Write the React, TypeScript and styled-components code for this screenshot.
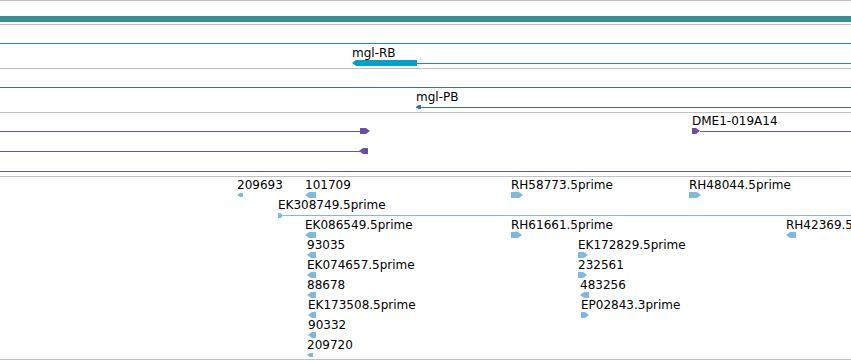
import React from 'react'
import styled, { createGlobalStyle } from 'styled-components'

const GlobalStyle = createGlobalStyle`
  html, body {
    margin: 0;
    padding: 0;
    background: #ffffff;
  }
`

const VIEW_WIDTH = 851
const LANE = 20

const Page = styled.div`
  width: ${VIEW_WIDTH}px;
  height: 360px;
  overflow: hidden;
  background: #ffffff;
  display: flex;
  flex-direction: column;
  font-family: 'DejaVu Sans', 'Liberation Sans', sans-serif;
  font-size: 12px;
  color: #000;
`

const Ruler = styled.div`
  box-sizing: border-box;
  height: 25px;
  padding-top: 15px;
  border-top: 1px solid #c0c0c0;
  border-bottom: 1px solid #c0c0c0;
`

const RulerBar = styled.div`
  height: 6px;
  background: #3e8d8e;
`

const Track = styled.section<{ $lanes: number }>`
  box-sizing: border-box;
  height: ${(p) => p.$lanes * LANE + 4}px;
  border-bottom: 1px solid #c0c0c0;
  display: flex;
  flex-direction: column;
`

const TallTrack = styled(Track)`
  height: ${(p) => p.$lanes * LANE + 3}px;
  flex: none;
`

/* one row of features; x positions along the row are genome coordinates */
const Lane = styled.div`
  position: relative;
  height: ${LANE}px;
  flex: none;
`

const Line = styled.div<{ $color: string }>`
  position: absolute;
  top: 18px;
  height: 1px;
  background: ${(p) => p.$color};
`

const Label = styled.span`
  position: absolute;
  top: 1px;
  line-height: 14px;
  white-space: nowrap;
`

const GlyphSvg = styled.svg`
  position: absolute;
  display: block;
  overflow: visible;
`

type Dir = 'l' | 'r'

type Feat = {
  x: number
  w: number
  dir: Dir
  label?: string
  h?: number
  lineFrom?: number
  lineTo?: number
}

const arrowPoints = (w: number, h: number, dir: Dir) => {
  const t = Math.min(4, w / 2)
  return dir === 'r'
    ? `0,0 ${w - t},0 ${w},${h / 2} ${w - t},${h} 0,${h}`
    : `${t},0 ${w},0 ${w},${h} ${t},${h} 0,${h / 2}`
}

const Feature = ({ f, color }: { f: Feat; color: string }) => {
  const h = f.h ?? 6
  return (
    <>
      {f.lineTo !== undefined && (
        <Line
          $color={color}
          style={{ left: f.lineFrom ?? f.x, width: f.lineTo - (f.lineFrom ?? f.x) }}
        />
      )}
      {f.label && <Label style={{ left: f.x }}>{f.label}</Label>}
      <GlyphSvg
        width={f.w}
        height={h}
        style={{ left: f.x, top: 18 - h / 2 }}
      >
        <polygon points={arrowPoints(f.w, h, f.dir)} fill={color} />
      </GlyphSvg>
    </>
  )
}

const FullLine = ({ color }: { color: string }) => (
  <Line $color={color} style={{ left: 0, width: VIEW_WIDTH }} />
)

const RB_LINE = '#1b90ac'
const RB_BAR = '#05a0c3'
const PB = '#3a6bbf'
const PURPLE = '#6a50a2'
const EST = '#80b8de'

const ests: Feat[][] = [
  [
    { x: 237, w: 6, dir: 'l', h: 4, label: '209693' },
    { x: 305, w: 11, dir: 'l', label: '101709' },
    { x: 511, w: 12, dir: 'r', label: 'RH58773.5prime' },
    { x: 689, w: 12, dir: 'r', label: 'RH48044.5prime' },
  ],
  [{ x: 278, w: 5, dir: 'r', h: 5, label: 'EK308749.5prime', lineTo: VIEW_WIDTH }],
  [
    { x: 305, w: 11, dir: 'l', label: 'EK086549.5prime' },
    { x: 511, w: 11, dir: 'r', label: 'RH61661.5prime' },
    { x: 786, w: 10, dir: 'l', label: 'RH42369.5prime' },
  ],
  [
    { x: 307, w: 9, dir: 'l', label: '93035' },
    { x: 578, w: 10, dir: 'r', label: 'EK172829.5prime' },
  ],
  [
    { x: 307, w: 9, dir: 'l', label: 'EK074657.5prime' },
    { x: 578, w: 9, dir: 'r', label: '232561' },
  ],
  [
    { x: 307, w: 9, dir: 'l', label: '88678' },
    { x: 580, w: 9, dir: 'l', label: '483256' },
  ],
  [
    { x: 308, w: 8, dir: 'l', label: 'EK173508.5prime' },
    { x: 581, w: 8, dir: 'r', label: 'EP02843.3prime' },
  ],
  [{ x: 308, w: 8, dir: 'l', label: '90332' }],
  [{ x: 307, w: 6, dir: 'l', h: 4, label: '209720' }],
]

const App = () => {
  return (
    <>
      <GlobalStyle />
      <Page>
        <Ruler>
          <RulerBar />
        </Ruler>

        <Track $lanes={2}>
          <Lane>
            <FullLine color={RB_LINE} />
          </Lane>
          <Lane>
            <Line $color={RB_LINE} style={{ left: 416, width: VIEW_WIDTH - 416 }} />
            <Feature f={{ x: 352, w: 65, dir: 'l', label: 'mgl-RB' }} color={RB_BAR} />
          </Lane>
        </Track>

        <Track $lanes={2}>
          <Lane>
            <FullLine color={PB} />
          </Lane>
          <Lane>
            <Feature
              f={{ x: 416, w: 5, dir: 'l', h: 4, label: 'mgl-PB', lineTo: VIEW_WIDTH }}
              color={PB}
            />
          </Lane>
        </Track>

        <Track $lanes={3}>
          <Lane>
            <Feature f={{ x: 360, w: 10, dir: 'r', lineFrom: 0, lineTo: 360 }} color={PURPLE} />
            <Feature
              f={{ x: 692, w: 8, dir: 'r', label: 'DME1-019A14', lineFrom: 700, lineTo: VIEW_WIDTH }}
              color={PURPLE}
            />
          </Lane>
          <Lane>
            <Feature f={{ x: 359, w: 9, dir: 'l', lineFrom: 0, lineTo: 360 }} color={PURPLE} />
          </Lane>
          <Lane>
            <FullLine color={PURPLE} />
          </Lane>
        </Track>

        <TallTrack $lanes={9}>
          {ests.map((row, i) => (
            <Lane key={i}>
              {row.map((f) => (
                <Feature key={f.label} f={f} color={EST} />
              ))}
            </Lane>
          ))}
        </TallTrack>
      </Page>
    </>
  )
}

export default App
